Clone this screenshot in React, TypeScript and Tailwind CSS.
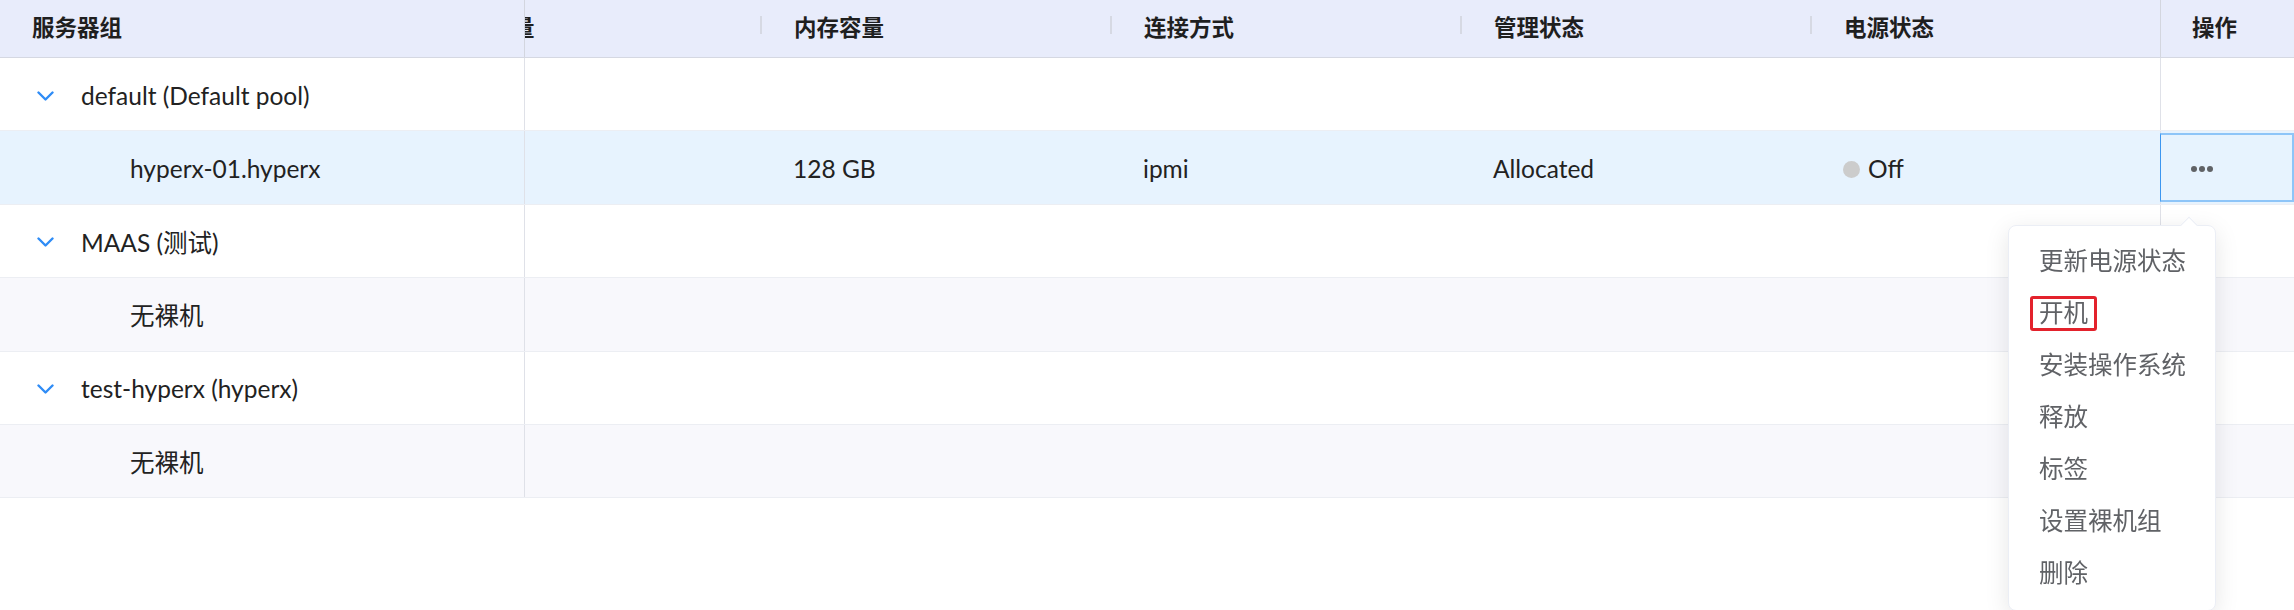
import { useLayoutEffect, useRef } from 'react';

const midCols = ['IP地址', 'CPU数量', '内存容量', '连接方式', '管理状态', '电源状态'];

interface Row {
  kind: 'group' | 'node' | 'empty';
  label: string;
  bg: string;
  cells?: string[];
  power?: string;
  selected?: boolean;
}

const rows: Row[] = [
  { kind: 'group', label: 'default (Default pool)', bg: 'bg-white' },
  {
    kind: 'node',
    label: 'hyperx-01.hyperx',
    bg: 'bg-[#e7f3fe]',
    cells: ['', '', '128 GB', 'ipmi', 'Allocated'],
    power: 'Off',
    selected: true,
  },
  { kind: 'group', label: 'MAAS (测试)', bg: 'bg-white' },
  { kind: 'empty', label: '无裸机', bg: 'bg-[#f8f8fc]' },
  { kind: 'group', label: 'test-hyperx (hyperx)', bg: 'bg-white' },
  { kind: 'empty', label: '无裸机', bg: 'bg-[#f8f8fc]' },
];

const menuItems = ['更新电源状态', '开机', '安装操作系统', '释放', '标签', '设置裸机组', '删除'];

function Chevron() {
  return (
    <svg width="17" height="11" viewBox="0 0 17 11" fill="none" className="shrink-0">
      <polyline points="1.5,1.5 8.5,8.5 15.5,1.5" stroke="#2f8cf6" strokeWidth="2.4" strokeLinecap="round" strokeLinejoin="round" />
    </svg>
  );
}

export default function App() {
  const scrollRef = useRef<HTMLDivElement>(null);

  // table is scrolled all the way right, left and right columns are sticky
  useLayoutEffect(() => {
    if (scrollRef.current) scrollRef.current.scrollLeft = 465;
  }, []);

  return (
    <div className="relative h-[610px] w-full overflow-hidden bg-white font-['Lato','Noto_Sans_CJK_SC',sans-serif] text-[#222]">
      <div ref={scrollRef} className="w-full overflow-hidden">
        <div className="w-[2759px]">
          {/* header */}
          <div className="flex h-[58px] border-b border-[#d5d8e2] bg-[#e8ecfb] text-[22.5px] font-bold text-[#1f1f1f]">
            <div className="sticky left-0 z-10 flex w-[525px] shrink-0 items-center border-r border-[#d3d6df] bg-[#e8ecfb] pb-[1px] pl-[32px]">
              服务器组
            </div>
            {midCols.map((c) => (
              <div
                key={c}
                className="relative flex w-[350px] shrink-0 items-center pb-[1px] pl-[34px] before:absolute before:left-0 before:top-[16px] before:h-[18px] before:w-[2px] before:bg-[#d6d9e3]"
              >
                {c}
              </div>
            ))}
            <div className="sticky right-0 z-10 flex w-[134px] shrink-0 items-center border-l border-[#d3d6df] bg-[#e8ecfb] pb-[1px] pl-[31px]">
              操作
            </div>
          </div>

          {/* body */}
          {rows.map((r, i) => (
            <div key={i} className={`flex h-[73.4px] border-b border-[#eceef3] text-[24.5px] ${r.bg}`}>
              <div className={`sticky left-0 z-10 flex w-[525px] shrink-0 items-center border-r border-[#dfe1e8] pt-[4px] ${r.bg}`}>
                {r.kind === 'group' ? (
                  <div className="flex items-center pl-[37px]">
                    <Chevron />
                    <span className="ml-[27px]">{r.label}</span>
                  </div>
                ) : (
                  <span className="pl-[130px]">{r.label}</span>
                )}
              </div>
              {midCols.map((c, j) => (
                <div key={c} className="flex w-[350px] shrink-0 items-center pl-[33px] pt-[4px]">
                  {r.cells && r.cells[j]}
                  {r.power && j === 5 && (
                    <span className="flex items-center">
                      <span className="mr-[8px] h-[17px] w-[17px] rounded-full bg-[#cccccc]" />
                      {r.power}
                    </span>
                  )}
                </div>
              ))}
              <div className={`sticky right-0 z-10 flex w-[134px] shrink-0 ${r.bg} border-l border-[#dfe1e8]`}>
                {r.selected && (
                  <div className="my-[2px] -ml-px flex flex-1 items-center border-y-2 border-l border-r-2 border-[#8ec5f8] border-l-[#3b96f0] pl-[30px] pt-[2px]">
                    <span className="flex gap-[2px]">
                      <span className="h-[6px] w-[6px] rounded-full bg-[#606266]" />
                      <span className="h-[6px] w-[6px] rounded-full bg-[#606266]" />
                      <span className="h-[6px] w-[6px] rounded-full bg-[#606266]" />
                    </span>
                  </div>
                )}
              </div>
            </div>
          ))}
        </div>
      </div>

      {/* dropdown menu */}
      <div className="absolute left-[2008px] top-[225px] z-20 w-[208px] rounded-[8px] border border-[#ebeef5] bg-white pb-[11px] pt-[9px] shadow-[0_6px_24px_rgba(0,0,0,0.10)]">
        <div className="absolute -top-[7px] left-[174px] h-[12px] w-[12px] rotate-45 border-l border-t border-[#ebeef5] bg-white" />
        {menuItems.map((m) => (
          <div key={m} className="flex h-[52px] items-center pl-[30px] text-[24.5px] text-[#606266]">
            {m === '开机' ? (
              <span className="-ml-[9px] flex h-[35px] items-center rounded-[3px] border-[3px] border-[#e3222c] px-[6px]">
                {m}
              </span>
            ) : (
              m
            )}
          </div>
        ))}
      </div>
    </div>
  );
}
